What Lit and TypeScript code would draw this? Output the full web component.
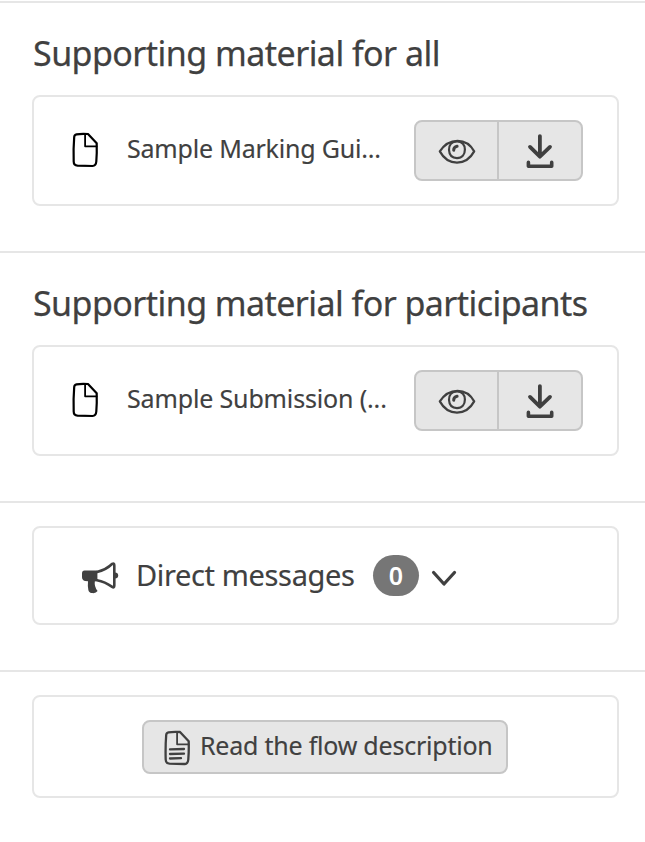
import { LitElement, html, css, svg } from "lit";
import { customElement, property } from "lit/decorators.js";

const page = svg`<path d="M6.5 4.4Q11 3.5 18 4L26.7 13.2Q27 23 26.3 31.5Q26 35.8 22.5 36L7.5 35.6Q3.7 35.4 3.7 31.5Q3.3 18 4.2 7Q4.4 4.8 6.5 4.4Z"/><path d="M15.1 4.4V16.3H26.6" stroke-width="1.8"/>`;

@customElement("material-card")
export class MaterialCard extends LitElement {
  @property() name = "";
  @property({ type: Number }) spacing = 0;

  static styles = css`
    :host { display: block; }
    .card {
      display: flex; align-items: center; box-sizing: border-box;
      width: 587px; height: 111px; padding: 0 34px 0 36px;
      border: 2px solid #e6e6e6; border-radius: 8px;
    }
    svg { display: block; fill: none; stroke-linecap: round; stroke-linejoin: round; }
    .file { stroke: #000; stroke-width: 2.2; flex: none; margin-top: -1px; }
    .name { flex: 1; margin: -6px 0 0 27px; font-size: 25px; line-height: 36px; white-space: nowrap; -webkit-text-stroke: 0.15px currentColor; }
    .group {
      display: flex; box-sizing: border-box; width: 169px; height: 61px;
      border: 2px solid #c6c6c6; border-radius: 8px; background: #e6e6e6; overflow: hidden;
    }
    button {
      flex: 1; display: flex; align-items: center; justify-content: center;
      border: 0; padding: 0; background: none; color: #404040;
    }
    .view { flex: 0 0 81px; border-right: 2px solid #c6c6c6; box-sizing: content-box; }
    .group svg { stroke: currentColor; }
  `;

  render() {
    return html`
      <div class="card">
        <svg class="file" width="30" height="40" viewBox="0 0 30 40">${page}</svg>
        <span class="name" style="letter-spacing:${this.spacing}px">${this.name}</span>
        <div class="group">
          <button class="view" aria-label="View">
            <svg width="40" height="30" viewBox="0 -0.8 40 30" stroke-width="2.2">
              <path d="M2.8 14.6C12 .5 29.5.5 37.2 14.6C29 29.5 11 29.5 2.8 14.6Z"/>
              <path d="M20 4.7C14.5 4.7 11.8 8.2 12 13.2C12.3 18.4 15 21.3 20 21.3C25.3 21.3 27.9 17.5 27.9 12.8C27.9 8 25.2 4.7 20 4.7Z"/>
              <path d="M16.7 13.5Q16.6 10.1 20.1 9.4" stroke-width="3"/>
            </svg>
          </button>
          <button aria-label="Download">
            <svg width="40" height="40" viewBox="-0.4 0.6 40 40">
              <path d="M19.5 5.7V25M9.6 16.5L19.5 26.3L29.6 16.5" stroke-width="3.8"/>
              <path d="M8 32V35.8H31.3V32" stroke-width="3.6"/>
            </svg>
          </button>
        </div>
      </div>
    `;
  }
}

@customElement("app-root")
export class AppRoot extends LitElement {
  static styles = css`
    :host {
      display: block; box-sizing: border-box; height: 842px; padding-top: 1px; background: #fff;
      color: #404040; font-family: "Noto Sans", sans-serif; font-weight: 400; overflow: hidden;
    }
    section { box-sizing: border-box; border-top: 2px solid #e6e6e6; padding: 0 32px; height: 250px; }
    h2 { margin: 0; padding: 24px 0 0 1px; height: 68px; font-size: 34px; line-height: 52px; font-weight: 400; white-space: nowrap; -webkit-text-stroke: 0.25px currentColor; }
    .all { letter-spacing: -0.54px; }
    .participants { letter-spacing: -0.56px; }
    .messages { height: 169px; padding-top: 23px; }
    .description { height: 171px; padding-top: 23px; }
    .card {
      display: flex; align-items: center; box-sizing: border-box; width: 587px;
      border: 2px solid #e6e6e6; border-radius: 8px;
    }
    .messages .card { height: 99px; padding-left: 46px; }
    .description .card { height: 103px; padding-left: 108px; }
    svg { display: block; flex: none; fill: none; stroke: currentColor; stroke-linecap: round; stroke-linejoin: round; }
    .horn { margin-top: 3px; }
    .label { width: 220px; margin: -1px 0 0 16px; font-size: 29px; line-height: 42px; letter-spacing: -0.36px; white-space: nowrap; -webkit-text-stroke: 0.15px currentColor; }
    .badge {
      display: flex; align-items: center; justify-content: center; width: 46px; height: 41px; margin-left: 17px;
      box-sizing: border-box; padding-bottom: 2px;
      border-radius: 20.5px; background: #767676; color: #fff; font-size: 25px; font-weight: 600;
    }
    .chevron { margin: 6px 0 0 11px; }
    .read {
      display: flex; align-items: center; box-sizing: border-box; width: 366px; height: 54px; padding: 0 0 0 18px;
      border: 2px solid #c6c6c6; border-radius: 8px; background: #e6e6e6;
      color: #404040; font: 400 25px/36px "Noto Sans", sans-serif; white-space: nowrap;
    }
    .read svg { margin-top: 2px; }
    .read span { margin: -3px 0 0 8px; letter-spacing: -0.22px; -webkit-text-stroke: 0.15px currentColor; }
  `;

  render() {
    return html`
      <section>
        <h2 class="all">Supporting material for all</h2>
        <material-card name="Sample Marking Gui..." .spacing=${-0.2}></material-card>
      </section>
      <section>
        <h2 class="participants">Supporting material for participants</h2>
        <material-card name="Sample Submission (..." .spacing=${-0.15}></material-card>
      </section>
      <section class="messages">
        <div class="card">
          <svg class="horn" width="40" height="36" viewBox="0 0 40 36">
            <path d="M4.5 11.6H17.4V22L14.8 22.4Q14.1 27.5 17.6 32Q16 34.4 12.5 34.1Q9.2 34.2 8.4 31.3Q7.5 27 8 22.3L5 21.9Q2 21.3 2 18V14.6Q2 11.8 4.5 11.6Z" fill="currentColor" stroke="none"/>
            <path d="M17 12.9Q26 11 32.3 4.8Q34.3 3.6 34.3 6.5V26.4Q34.3 29.4 32.2 27.9Q25 22.6 17 21.2" stroke-width="2.6"/>
            <path d="M35 13.6Q38.2 13.8 38.2 16.5Q38.2 19.3 35 19.5Z" fill="currentColor" stroke="none"/>
          </svg>
          <span class="label">Direct messages</span>
          <span class="badge">0</span>
          <svg class="chevron" width="28" height="20" viewBox="0 0 28 20" stroke-width="3.3"><path d="M3.6 3.5L14 15L24.5 3.5"/></svg>
        </div>
      </section>
      <section class="description">
        <div class="card">
          <button class="read">
            <svg width="30" height="40" viewBox="0 0 30 40" stroke-width="2.3">${page}
              <path d="M8 21.4L22 21M8 26L22 25.7M8 30.5L19 30.2"/>
            </svg>
            <span>Read the flow description</span>
          </button>
        </div>
      </section>
    `;
  }
}
